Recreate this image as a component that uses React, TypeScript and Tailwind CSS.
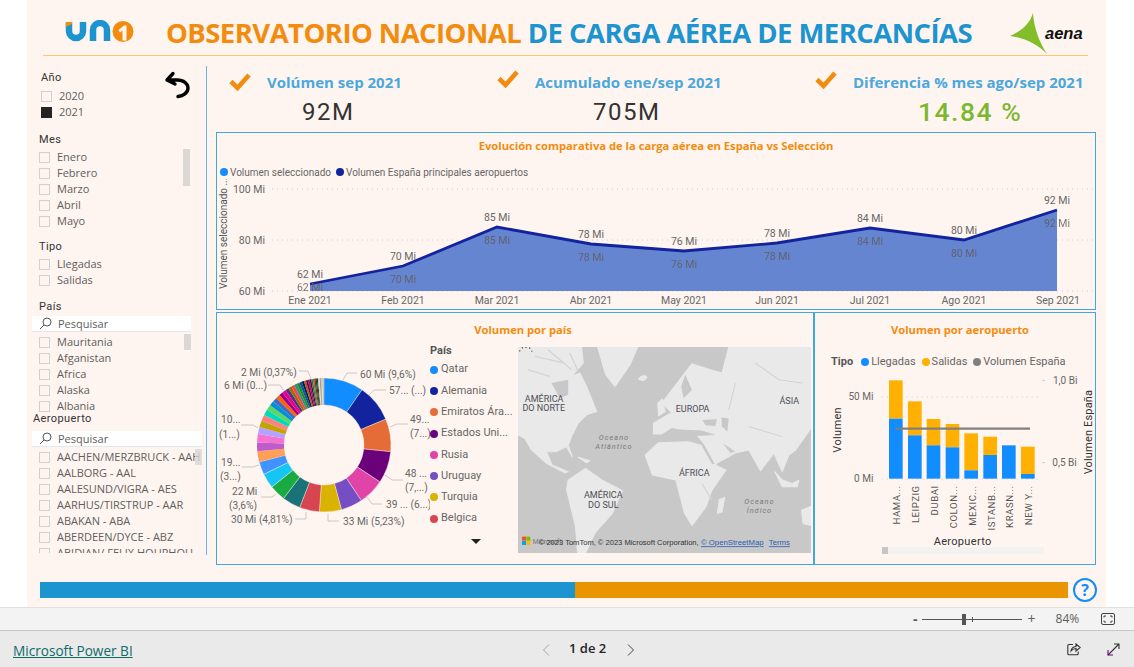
import React from "react";

const UI = '"Open Sans", "Noto Sans", sans-serif';
const DIN = 'Roboto, "Noto Sans", sans-serif';

function Box({ on }: { on?: boolean }) {
  return <span className={`block w-[11px] h-[11px] shrink-0 border ${on ? "bg-[#252423] border-[#252423]" : "border-[#d3d0ce]"}`} />;
}

function Item({ label, on }: { label: string; on?: boolean }) {
  return (
    <div className="flex items-center h-[16px] gap-[7px] whitespace-nowrap">
      <Box on={on} />
      <span className="text-[11px] text-[#605e5c] leading-[16px]">{label}</span>
    </div>
  );
}

function Search() {
  return (
    <div className="flex items-center h-[16px] bg-white border-b border-[#e6e6e6] pl-[7px] gap-[6px]">
      <svg width="13" height="13" viewBox="0 0 13 13" fill="none" stroke="#444" strokeWidth="0.9">
        <circle cx="8" cy="5" r="4" />
        <path d="M5 8 L1 12" />
      </svg>
      <span className="text-[11px] text-[#605e5c] leading-[16px]">Pesquisar</span>
    </div>
  );
}

function Heading({ children, cls }: { children: React.ReactNode; cls?: string }) {
  return <div className={`text-[11px] tracking-[0.4px] text-[#333] leading-[14px] ${cls ?? ""}`} style={{ fontFamily: DIN }}>{children}</div>;
}

function Sidebar() {
  return (
    <div className="w-[180px] h-[489px] shrink-0 border-r border-[#6eb2ea] relative">
      <div className="pt-[5px] pl-[14px]">
        <Heading>Año</Heading>
        <div className="mt-[3px]">
          <Item label="2020" />
          <Item label="2021" on />
        </div>
      </div>
      <svg className="absolute left-[137px] top-[5px]" width="28" height="28" viewBox="0 0 28 28" fill="none" stroke="#000" strokeWidth="3.4" strokeLinecap="round" strokeLinejoin="round">
        <path d="M3 9 L9 2.5 M3 9 L11 13 M3 9 H13 C20 9 24 13 24 17 C24 22 19 25 14 25.5" />
      </svg>
      <div className="pl-[12px] pr-[16px] mt-[13px]">
        <Heading>Mes</Heading>
        <div className="flex mt-[2px]">
          <div className="flex-1">
            {["Enero", "Febrero", "Marzo", "Abril", "Mayo"].map((m) => <Item key={m} label={m} />)}
          </div>
          <div className="w-[7px] h-[37px] bg-[#dad7d4]" />
        </div>
        <Heading cls="mt-[11px]">Tipo</Heading>
        <div className="mt-[2px]">
          <Item label="Llegadas" />
          <Item label="Salidas" />
        </div>
        <Heading cls="mt-[12px]">País</Heading>
      </div>
      <div className="ml-[5px] w-[159px] mt-[2px]">
        <Search />
        <div className="flex h-[78px] overflow-hidden pl-[7px] mt-[2px]">
          <div className="flex-1">
            {["Mauritania", "Afganistan", "Africa", "Alaska", "Albania"].map((m) => <Item key={m} label={m} />)}
          </div>
          <div className="w-[7px] h-[18px] -mt-[2px] bg-[#dad7d4]" />
        </div>
      </div>
      <div className="pl-[6px]">
        <Heading>Aeropuerto</Heading>
      </div>
      <div className="ml-[5px] w-[170px] mt-[5px]">
        <Search />
        <div className="flex h-[104px] overflow-hidden pl-[7px] relative mt-[2px]">
          <div className="flex-1 min-w-0">
            {[
              "AACHEN/MERZBRUCK - AAH",
              "AALBORG - AAL",
              "AALESUND/VIGRA - AES",
              "AARHUS/TIRSTRUP - AAR",
              "ABAKAN - ABA",
              "ABERDEEN/DYCE - ABZ",
              "ABIDJAN/ FELIX HOUPHOU",
            ].map((m) => <Item key={m} label={m} />)}
          </div>
          <div className="absolute right-0 top-0 w-[7px] h-[16px] bg-[#dad7d4]/80" />
        </div>
      </div>
    </div>
  );
}

function Check({ cls }: { cls?: string }) {
  return (
    <svg width="22" height="20" viewBox="0 0 22 20" fill="none" stroke="#f28c0f" strokeWidth="4.6" className={`shrink-0 ${cls ?? ""}`}>
      <path d="M2 9.5 L8.5 16 L20 3" />
    </svg>
  );
}

function Kpi({ title, value, green, w, head, val, chk }: { title: string; value: string; green?: boolean; w: string; head: string; val: string; chk?: string }) {
  return (
    <div className={`flex flex-col ${w}`}>
      <div className={`flex items-start h-[20px] ${head}`}>
        <Check cls={chk} />
        <div className="text-[15px] font-bold text-[#4aa8dc] leading-[20px] whitespace-nowrap ml-[16px]" style={{ fontFamily: UI }}>{title}</div>
      </div>
      <div className={`leading-[30px] tracking-[1.5px] mt-[5px] ${val} ${green ? "text-[26.5px] font-medium text-[#7cb82f]" : "text-[24px] text-[#333]"}`} style={{ fontFamily: DIN }}>{value}</div>
    </div>
  );
}

const months = ["Ene", "Feb", "Mar", "Abr", "May", "Jun", "Jul", "Ago", "Sep"];
const xs = [310, 403, 497, 591, 684, 777, 870, 964, 1057];
const ys = [284, 266, 227, 244, 251, 243, 228, 240, 210];
const vals = [62, 70, 85, 78, 76, 78, 84, 80, 92];

function LegendDot({ color, label }: { color: string; label: string }) {
  return (
    <span className="flex items-center gap-[2px] whitespace-nowrap">
      <span className="w-[8px] h-[8px] rounded-full" style={{ background: color }} />
      <span>{label}</span>
    </span>
  );
}

function LineChart() {
  const ox = 217, oy = 179;
  const pts = xs.map((x, i) => `${x - ox},${ys[i] - oy}`).join(" ");
  const area = `${xs[0] - ox},${291 - oy} ${pts} ${xs[8] - ox},${291 - oy}`;
  return (
    <div className="h-[178px] border border-[#3fa9dc] flex flex-col">
      <div className="text-center text-[11.2px] font-bold text-[#f28c0f] leading-[16px] pt-[5px] h-[22px]" style={{ fontFamily: UI }}>
        Evolución comparativa de la carga aérea en España vs Selección
      </div>
      <div className="flex gap-[5px] pl-[3px] mt-[10px] h-[14px] items-center text-[10px] text-[#666]" style={{ fontFamily: DIN }}>
        <LegendDot color="#118dff" label="Volumen seleccionado" />
        <LegendDot color="#12239e" label="Volumen España principales aeropuertos" />
      </div>
      <svg width="878" height="130" viewBox="0 0 878 130" style={{ fontFamily: DIN }} className="block">
        {[189, 240, 291].map((y) => (
          <line key={y} x1="55" x2="878" y1={y - oy} y2={y - oy} stroke="#ccc" strokeDasharray="1 4" />
        ))}
        <polygon points={area} fill="#6685d1" />
        <polyline points={pts} fill="none" stroke="#12239e" strokeWidth="2.8" />
        <text transform="translate(10,110) rotate(-90)" fontSize="10" fill="#555">Volumen seleccionado ...</text>
        {[["100 Mi", 189], ["80 Mi", 240], ["60 Mi", 291]].map(([t, y]) => (
          <text key={t as string} x="48" y={(y as number) - oy + 4} textAnchor="end" fontSize="10.5" fill="#666">{t}</text>
        ))}
        {xs.map((x, i) => (
          <g key={i} fontSize="10.5" textAnchor="middle">
            <text x={x - ox} y={ys[i] - oy - 6} fill="#666">{vals[i]} Mi</text>
            <text x={x - ox} y={ys[i] - oy + (i === 0 ? 7 : 17)} fill="#605e5c" opacity="0.85">{vals[i]} Mi</text>
            <text x={x - ox + (i === 8 ? 1 : 0)} y="125" fill="#666">{months[i]} 2021</text>
          </g>
        ))}
      </svg>
    </div>
  );
}

const pal = ["#118DFF","#12239E","#E66C37","#6B007B","#E044A7","#744EC2","#D9B300","#D64550","#197278","#1AAB40","#15C6F4","#4092FF","#FFA058","#BE5DC9","#F472D0","#B5A1FF","#C4A200","#FF8080","#00DBBC","#5BD667","#0091D5","#4668C5","#FF6300","#99008A","#EC008C","#533285","#99700A","#FF4141","#1F9A85","#25891C","#0057A2","#002050","#C94F0F","#450F54","#B60064","#34124F","#6A5A29","#1AAB40","#BA141A","#0C3D37","#0B511F"];
const shares = [9.6,9.1,7.9,7.7,6.3,5.23,5.3,4.81,4.4,3.9,3.6,3.1,2.6,2.1,2.0,1.7,1.6,1.5,1.4,1.3,1.2,1.1,1.0,0.95,0.9,0.85,0.8,0.75,0.7,0.65,0.6,0.55,0.5,0.45,0.42,0.4,0.37,0.35,0.33,0.3,0.28,0.25,0.2,0.2,0.18,0.16,0.15,0.12,0.1,0.1];

function Donut() {
  const cx = 107, cy = 132, R = 67, r = 40;
  const total = shares.reduce((a, b) => a + b, 0);
  let a0 = 0;
  const segs = shares.map((s, i) => {
    const a1 = a0 + (s / total) * Math.PI * 2;
    const p = (ang: number, rad: number) => `${(cx + rad * Math.sin(ang)).toFixed(2)} ${(cy - rad * Math.cos(ang)).toFixed(2)}`;
    const large = a1 - a0 > Math.PI ? 1 : 0;
    const d = `M${p(a0, R)} A${R} ${R} 0 ${large} 1 ${p(a1, R)} L${p(a1, r)} A${r} ${r} 0 ${large} 0 ${p(a0, r)} Z`;
    a0 = a1;
    const c = i < pal.length ? pal[i] : ["#a8a090", "#cfc9b8", "#e0dcd0", "#8a8a7a"][i % 4];
    return <path key={i} d={d} fill={c} stroke={i < 12 ? "#fff5f0" : "none"} strokeWidth={i < 12 ? 0.4 : 0} />;
  });
  const labels: [string, number, number][] = [
    ["2 Mi (0,37%)", 24, 63],
    ["6 Mi (0...)", 7, 76],
    ["10...", 4, 110],
    ["(1...)", 2, 124.5],
    ["19...", 4, 152.5],
    ["(3...)", 3, 166.5],
    ["22 Mi", 15, 182],
    ["(3,6%)", 12, 196],
    ["30 Mi (4,81%)", 14, 210],
    ["33 Mi (5,23%)", 126, 212],
    ["39 ... (6...)", 169, 195],
    ["48 ...", 188, 164],
    ["(7,...)", 188, 178],
    ["49...", 193, 110],
    ["(7...)", 193, 124],
    ["57... (...)", 172, 81],
    ["60 Mi (9,6%)", 143, 65],
  ];
  const leaders = ["M82 58 H91 L94 66", "M51 72 H63 L66 77", "M24 112 H36 L41 115", "M25 154 H36 L42 152", "M44 184 H55 L59 181", "M78 206 H89 V199", "M111 201 V208 H122", "M150 184 L155 191 H165", "M168 162 L175 167 H186", "M173 114 L180 111 H191", "M152 82 L157 77 H169", "M126 67 L130 60 H140"];
  return (
    <svg width="213" height="235" viewBox="0 0 213 235" style={{ fontFamily: DIN }} className="block shrink-0">
      {segs}
      {leaders.map((d, i) => <path key={i} d={d} fill="none" stroke="#bdbdbd" strokeWidth="0.8" />)}
      {labels.map(([t, x, y]) => <text key={t} x={x} y={y} fontSize="10.2" fill="#666">{t}</text>)}
    </svg>
  );
}

function CountryLegend() {
  const rows: [string, string][] = [["#118DFF","Qatar"],["#12239E","Alemania"],["#E66C37","Emiratos Ára..."],["#6B007B","Estados Uni..."],["#E044A7","Rusia"],["#744EC2","Uruguay"],["#D9B300","Turquia"],["#D64550","Belgica"]];
  return (
    <div className="w-[88px] shrink-0 pt-[31px]" style={{ fontFamily: DIN }}>
      <div className="text-[11px] font-bold text-[#555] leading-[14px]">País</div>
      <div className="mt-[1px]">
        {rows.map(([c, t]) => (
          <div key={t} className="flex items-center h-[21.3px] gap-[3px] text-[11px] text-[#666] whitespace-nowrap">
            <span className="w-[8px] h-[8px] rounded-full shrink-0" style={{ background: c }} />
            <span>{t}</span>
          </div>
        ))}
      </div>
      <div className="mt-[10px] ml-[41px] w-0 h-0 border-x-[5px] border-x-transparent border-t-[5px] border-t-[#222]" />
    </div>
  );
}

function MapView() {
  const land = "#e9e9e9";
  const sea0 = "#c8c8c8";
  const shapes = [
    "M10 22 L200 22 L205 70 L170 110 L195 100 L215 140 L245 215 L215 225 L190 250 L170 290 L160 315 L172 350 L155 320 L125 335 L95 335 L112 375 L160 395 L150 398 L95 370 L50 330 L30 295 L10 285 Z",
    "M248 22 L368 22 L345 75 L300 140 L272 105 Z",
    "M160 420 L212 385 L262 420 L322 452 L292 520 L240 578 L212 638 L188 638 L182 560 L155 448 Z",
    "M390 345 L430 308 L520 305 L565 318 L605 378 L632 390 L590 450 L572 500 L530 556 L508 520 L482 420 L412 405 Z",
    "M415 282 L415 250 L470 218 L440 190 L470 150 L530 72 L585 90 L620 100 L640 22 L886 22 L886 265 L840 330 L820 345 L800 395 L775 340 L735 392 L700 330 L662 338 L600 372 L565 310 L545 285 L520 275 L470 262 L440 282 Z",
    "M612 478 L628 472 L620 515 L606 520 Z",
    "M858 510 L886 498 L886 556 L862 550 Z",
    "M778 395 L800 420 L830 430 L850 420 L845 440 L800 440 Z",
    "M370 118 Q382 102 396 112 Q388 128 370 118 Z",
    "M428 190 L442 178 L450 215 L430 228 Z",
    "M190 352 L225 362 L215 368 Z",
  ];
  const sea = [
    "M110 130 L160 120 L160 165 L135 175 Z",
    "M510 105 L530 150 L505 175 L498 140 Z",
    "M475 268 L560 272 L600 285 L540 288 L480 282 Z",
    "M562 240 L605 238 L600 258 L570 256 Z",
    "M618 232 L640 236 L636 275 L620 260 Z",
    "M565 312 L598 372 L590 372 L560 318 Z",
    "M622 310 L660 335 L645 338 Z",
  ];
  return (
    <div className="w-[293px] h-[206px] shrink-0 bg-[#c8c8c8] overflow-hidden mt-[34px]">
      <svg width="293" height="206" viewBox="10 22 876 616" className="block" style={{ fontFamily: "Roboto, sans-serif" }}>
        <defs>
          <filter id="mapblur"><feGaussianBlur stdDeviation="1.2" /></filter>
        </defs>
        <g filter="url(#mapblur)">
          {shapes.map((d, i) => <path key={i} d={d} fill={land} stroke={land} strokeWidth="3" strokeLinejoin="round" />)}
          {sea.map((d, i) => <path key={i} d={d} fill={sea0} />)}
          <path d="M60 50 L150 70 M100 30 L170 90 M40 90 L105 110 M165 40 L190 95" fill="none" stroke="#d4d4d4" strokeWidth="4" />
          <path d="M720 70 L790 120 L860 130 M660 130 L640 210 M700 260 L800 290 M560 430 L590 480" fill="none" stroke="#d2d2d2" strokeWidth="3" />
        </g>
        <path d="M14 35 L25 22 L44 24 L52 36" fill="none" stroke="#555" strokeWidth="4" strokeDasharray="4 8" />
        <g fontSize="27" fill="#4d4d55" textAnchor="middle">
          <text x="88" y="185">AMÉRICA</text>
          <text x="87" y="213">DO NORTE</text>
          <text x="532" y="215">EUROPA</text>
          <text x="821" y="191">ÁSIA</text>
          <text x="537" y="408">ÁFRICA</text>
          <text x="265" y="474">AMÉRICA</text>
          <text x="265" y="502">DO SUL</text>
        </g>
        <g fontSize="22" fill="#7a7a7a" textAnchor="middle" fontStyle="italic" letterSpacing="3">
          <text x="297" y="299">Oceano</text>
          <text x="297" y="327">Atlântico</text>
          <text x="732" y="491">Oceano</text>
          <text x="732" y="518">Índico</text>
        </g>
        <rect x="22" y="589" width="12" height="12" fill="#f25022" />
        <rect x="35" y="589" width="12" height="12" fill="#7fba00" />
        <rect x="22" y="602" width="12" height="12" fill="#00a4ef" />
        <rect x="35" y="602" width="12" height="12" fill="#ffb900" />
        <text x="54" y="610" fontSize="20" fill="#777">Microsoft</text>
        <text x="72" y="615" fontSize="22.6" fill="#333" fontFamily='"Liberation Sans", sans-serif'>© 2023 TomTom, © 2023 Microsoft Corporation,</text>
        <text x="557" y="615" fontSize="23.2" fill="#2a5bb0" textDecoration="underline" fontFamily='"Liberation Sans", sans-serif'>© OpenStreetMap</text>
        <text x="760" y="615" fontSize="23.2" fill="#2a5bb0" textDecoration="underline" fontFamily='"Liberation Sans", sans-serif'>Terms</text>
      </svg>
    </div>
  );
}

function BarChart() {
  const bars: [string, number, number, number][] = [
    ["HAMA...", 222, 205, 320],
    ["LEIPZIG", 279, 268, 370],
    ["DUBAI", 335, 321, 400],
    ["COLON...", 392, 336, 406],
    ["MEXIC...", 448, 364, 475],
    ["ISTANB...", 505, 374, 429],
    ["KRASN...", 561, 400, 400],
    ["NEW Y...", 618, 404, 486],
  ];
  return (
    <svg width="280" height="182" viewBox="0 165 840 546" style={{ fontFamily: DIN }} className="block">
      <line x1="200" x2="675" y1="255" y2="255" stroke="#ccc" strokeWidth="3" strokeDasharray="3 12" />
      <line x1="200" x2="675" y1="501" y2="501" stroke="#ccc" strokeWidth="3" strokeDasharray="3 12" />
      <line x1="682" x2="690" y1="205" y2="205" stroke="#ccc" strokeWidth="3" />
      <line x1="682" x2="690" y1="452" y2="452" stroke="#ccc" strokeWidth="3" />
      {bars.map(([n, x, t, s]) => (
        <g key={n}>
          <rect x={x} y={t} width="41" height={s - t} fill="#ffb000" />
          <rect x={x} y={s} width="41" height={500 - s} fill="#118dff" />
          <text transform={`translate(${x + 34},520) rotate(-90)`} textAnchor="end" fontSize="29" fill="#555" letterSpacing="1.5">{n}</text>
        </g>
      ))}
      <line x1="242" x2="645" y1="350" y2="350" stroke="#7f7f7f" strokeWidth="7" />
      <g fontSize="30" fill="#666">
        <text x="175" y="264" textAnchor="end">50 Mi</text>
        <text x="175" y="509" textAnchor="end">0 Mi</text>
        <text x="714" y="215">1,0 Bi</text>
        <text x="712" y="461">0,5 Bi</text>
      </g>
      <text transform="translate(77,422) rotate(-90)" fontSize="33" fill="#333" letterSpacing="1">Volumen</text>
      <text transform="translate(831,487) rotate(-90)" fontSize="33" fill="#333" letterSpacing="0.5">Volumen España</text>
      <text x="443" y="699" textAnchor="middle" fontSize="33" fill="#333" letterSpacing="1">Aeropuerto</text>
    </svg>
  );
}

export default function App() {
  return (
    <div className="w-[1134px] h-[667px] bg-white overflow-hidden flex flex-col" style={{ fontFamily: UI }}>
      <div className="h-[607px] ml-[27px] w-[1079px] bg-[#fff5f0] flex flex-col shrink-0">
        {/* header */}
        <div className="mx-[16px] w-[1045px] h-[56px] border-b border-[#fcc96a] flex items-start relative">
          <svg className="ml-[22px] mt-[20px] shrink-0" width="70" height="24" viewBox="0 0 70 24" fill="none">
            <path d="M4 2 V11 A7 7 0 0 0 18 11 V2" stroke="#1c94d0" strokeWidth="6.5" />
            <path d="M0.8 7 L1 2 H7 V4 Z" fill="#f28c0f" />
            <path d="M28 21 V10 A7 7 0 0 1 42 10 V21" stroke="#1c94d0" strokeWidth="6.5" />
            <circle cx="58" cy="11.5" r="10.5" fill="#f28c0f" />
            <path d="M53.5 10 L59 5.5 H61.5 V20.5 H57.5 V10.5 L55 12.5 Z" fill="#fff5f0" />
          </svg>
          <div className="ml-[31px] mt-[15px] text-[27.5px] font-bold leading-[36px] whitespace-nowrap tracking-[-0.55px]">
            <span className="text-[#f28c0f]">OBSERVATORIO NACIONAL </span>
            <span className="text-[#1c94d0]">DE CARGA AÉREA DE MERCANCÍAS</span>
          </div>
          <svg className="absolute left-[967px] top-[13px]" width="40" height="42" viewBox="0 0 40 42">
            <path d="M0 23 C12 18 20 10 23 0 C24 16 30 30 37 41 C27 31 15 25 0 23 Z" fill="#84bd2a" />
          </svg>
          <div className="absolute left-[1002px] top-[23px] text-[16.5px] font-black italic text-[#111] leading-[20px]" style={{ fontFamily: '"Liberation Sans", sans-serif' }}>aena</div>
        </div>
        {/* body */}
        <div className="flex items-start mt-[10px]">
          <Sidebar />
          <div className="w-[880px] ml-[9px]">
            <div className="h-[66px] flex pt-[6px]">
              <Kpi w="w-[277px]" head="ml-[13px]" val="pl-[86px]" title="Volúmen sep 2021" value="92M" />
              <Kpi w="w-[290px]" head="ml-[4px]" chk="-mt-[3px]" val="pl-[100px]" title="Acumulado ene/sep 2021" value="705M" />
              <Kpi w="w-[280px]" head="ml-[32px]" chk="-mt-[2px]" val="pl-[135px]" title="Diferencia % mes ago/sep 2021" value="14.84 %" green />
            </div>
            <LineChart />
            <div className="flex mt-[2px] h-[253px]">
              <div className="w-[598px] border border-[#3fa9dc] flex flex-col">
                <div className="text-center text-[11.2px] font-bold text-[#f28c0f] leading-[16px] pt-[9px] pl-[16px]">Volumen por país</div>
                <div className="flex items-start -mt-[25px]">
                  <Donut />
                  <CountryLegend />
                  <MapView />
                </div>
              </div>
              <div className="w-[282px] border border-[#3fa9dc] flex flex-col">
                <div className="text-center text-[11.2px] font-bold text-[#f28c0f] leading-[16px] pt-[9px] pl-[10px]">Volumen por aeropuerto</div>
                <div className="flex items-center gap-[2px] pl-[16px] mt-[17px] h-[14px] text-[11px] text-[#666]" style={{ fontFamily: DIN }}>
                  <span className="font-bold text-[#555] mr-[6px]">Tipo</span>
                  <LegendDot color="#118dff" label="Llegadas" />
                  <span className="w-[2px]" />
                  <LegendDot color="#ffb000" label="Salidas" />
                  <span className="w-[2px]" />
                  <LegendDot color="#7f7f7f" label="Volumen España" />
                </div>
                <div className="-mt-[2px]">
                  <BarChart />
                </div>
                <div className="ml-[67px] w-[162px] h-[7px] bg-[#f3f2f1] -mt-[2px]">
                  <div className="w-[6px] h-[7px] bg-[#c8c6c4]" />
                </div>
              </div>
            </div>
          </div>
        </div>
        {/* progress */}
        <div className="flex items-center ml-[13px] mt-[13px]">
          <div className="flex w-[1028px] h-[16px]">
            <div className="w-[535px] bg-[#1c94d0]" />
            <div className="flex-1 bg-[#ea9400]" />
          </div>
          <div className="ml-[5px] w-[24px] h-[24px] rounded-full border-[2.5px] border-[#118dff] flex items-center justify-center text-[16px] font-bold text-[#118dff] leading-none">?</div>
        </div>
      </div>
      {/* zoom bar */}
      <div className="h-[24px] bg-[#f3f3f3] border-t border-b border-t-[#e1e1e1] border-b-[#c8c8c8] flex items-center shrink-0 text-[#605e5c]">
        <span className="ml-[913px] text-[14px] leading-none font-bold">-</span>
        <span className="ml-[4px] w-[100px] h-[1px] bg-[#555] relative">
          <span className="absolute left-[40px] top-[-5px] w-[4px] h-[11px] bg-[#555]" />
          <span className="absolute left-[50px] top-[-2px] w-[1px] h-[5px] bg-[#555]" />
        </span>
        <span className="ml-[6px] text-[14px] leading-none">+</span>
        <span className="ml-[20px] text-[12px] leading-none">84%</span>
        <svg className="ml-[22px]" width="14" height="12" viewBox="0 0 14 12" fill="none" stroke="#444">
          <rect x="0.5" y="0.5" width="13" height="11" rx="1.5" />
          <path d="M3 4.5 V3 H5 M9 3 H11 V4.5 M11 7.5 V9 H9 M5 9 H3 V7.5" />
        </svg>
      </div>
      {/* footer */}
      <div className="flex-1 bg-[#eaeaea] flex items-center">
        <a className="ml-[13px] w-[120px] text-[13.6px] font-medium text-[#106b6b] underline whitespace-nowrap pt-[4px]">Microsoft Power BI</a>
        <svg className="ml-[409px] mt-[1px] shrink-0" width="8" height="12" viewBox="0 0 8 12" fill="none" stroke="#a5a5a5"><path d="M7 0.5 L1.5 6 L7 11.5" /></svg>
        <span className="ml-[19px] w-[38px] text-[13px] font-semibold text-[#252423] whitespace-nowrap">1 de 2</span>
        <svg className="ml-[20px] mt-[1px] shrink-0" width="8" height="12" viewBox="0 0 8 12" fill="none" stroke="#444"><path d="M1 0.5 L6.5 6 L1 11.5" /></svg>
        <svg className="ml-[432px] shrink-0" width="14" height="14" viewBox="0 0 14 14" fill="none" stroke="#333" strokeWidth="1.1">
          <path d="M6 2.5 H2 Q0.8 2.5 0.8 3.8 V11.5 Q0.8 12.8 2 12.8 H10 Q11.2 12.8 11.2 11.5 V9.5" />
          <path d="M4 9 Q4.5 5 9 4.5 V2 L13.2 5.5 L9 9 V6.5 Q6 6.5 4 9 Z" />
        </svg>
        <svg className="ml-[26px] shrink-0" width="13" height="13" viewBox="0 0 13 13" fill="none" stroke="#333" strokeWidth="1.1">
          <path d="M1 12 L12 1 M7 1 H12 V6" />
          <path d="M1 7 V12 H6" stroke="#6b007b" />
        </svg>
      </div>
    </div>
  );
}
